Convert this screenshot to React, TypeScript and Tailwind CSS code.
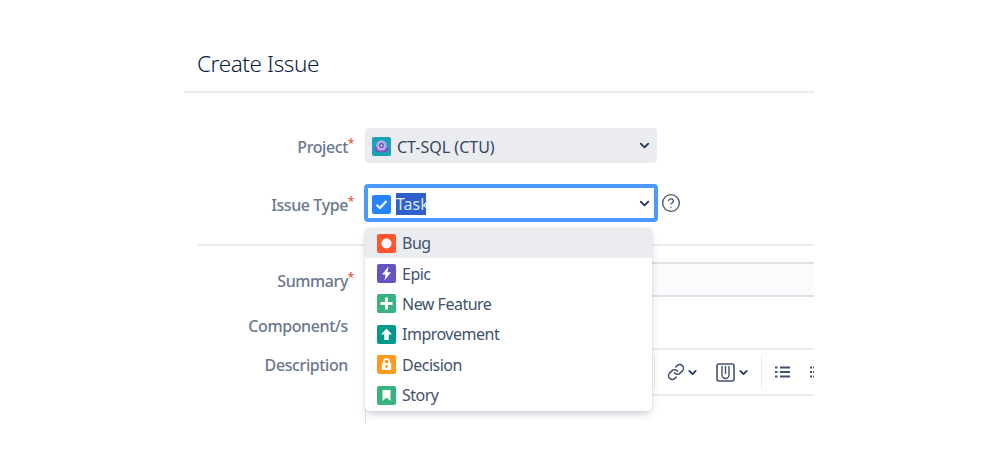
import { ChevronDown, CircleHelp, Link } from 'lucide-react';
import type { ReactNode } from 'react';

const font = { fontFamily: '"Noto Sans", "Open Sans", sans-serif' };

function Label({ text, required, className }: { text: string; required?: boolean; className?: string }) {
    return (
        <div className={`w-[181px] shrink-0 flex justify-end pr-[17px] text-[16px] leading-[22px] tracking-[-0.4px] font-medium text-[#6b778c] ${className ?? ''}`}>
            <span className="relative">
                {text}
                {required && <span className="absolute -right-[6px] -top-[3px] text-[12px] text-[#e5573a]">*</span>}
            </span>
        </div>
    );
}

function IssueIcon({ bg, children }: { bg: string; children: ReactNode }) {
    return (
        <svg width="19" height="19" viewBox="0 0 19 19" className="shrink-0">
            <rect width="19" height="19" rx="2" fill={bg} />
            {children}
        </svg>
    );
}

const issueTypes = [
    { name: 'Bug', bg: '#ff5630', glyph: <circle cx="9.5" cy="9.5" r="5" fill="#fff" /> },
    { name: 'Epic', bg: '#6554c0', glyph: <path d="M11.5 2.5 5 10.5h3.5L7.5 16.5l6.5-8.2h-3.6z" fill="#fff" /> },
    { name: 'New Feature', bg: '#36b37e', glyph: <path d="M9.5 3.5v12M3.5 9.5h12" stroke="#fff" strokeWidth="2.8" /> },
    { name: 'Improvement', bg: '#00998a', glyph: <path d="M9.5 3.5 15 9.5h-3.2V15H7.2V9.5H4z" fill="#fff" /> },
    {
        name: 'Decision',
        bg: '#ff991f',
        glyph: (
            <>
                <path d="M6.8 8.5V6.5a2.7 2.7 0 0 1 5.4 0v2" fill="none" stroke="#fff" strokeWidth="1.7" />
                <rect x="4.8" y="8" width="9.4" height="7" rx="1" fill="#fff" />
                <circle cx="9.5" cy="11.5" r="1.4" fill="#ff991f" />
            </>
        ),
    },
    { name: 'Story', bg: '#36b37e', glyph: <path d="M5.5 4h8v11l-4-3.2-4 3.2z" fill="#fff" /> },
];

function ToolbarDivider() {
    return <div className="w-[1px] h-[36px] bg-[#ebecf0] shrink-0" />;
}

export default function App() {
    return (
        <div className="w-[998px] h-[457px] bg-white overflow-hidden" style={font}>
            <div className="w-[630px] h-[457px] ml-[184px] overflow-hidden">
                <div className="h-[93px] border-b-2 border-[#ebecf0] pl-[13px] pt-[47px] text-[22.5px] font-light leading-[34px] tracking-[-0.4px] text-[#091e42]">
                    Create Issue
                </div>

                <div className="flex items-center mt-[35px] h-[35px]">
                    <Label text="Project" required className="mt-[3px]" />
                    <div className="w-[292px] h-[35px] rounded-[4px] bg-[#ebecf0] flex items-center pl-[7px] pr-[5px]">
                        <svg width="19" height="19" viewBox="0 0 19 19" className="shrink-0 mt-[2px]">
                            <rect width="19" height="19" rx="2" fill="#1aa3b8" />
                            <ellipse cx="9.5" cy="12" rx="7" ry="3.6" fill="#7d4fc2" />
                            <circle cx="9.5" cy="8.5" r="5.2" fill="#b9a8e6" />
                            <circle cx="9.5" cy="8.5" r="2.4" fill="#5a49b0" />
                            <circle cx="9.5" cy="8.5" r="1" fill="#fff" />
                        </svg>
                        <span className="ml-[6px] mt-[2px] text-[16px] text-[#344563]">CT-SQL (CTU)</span>
                        <ChevronDown size={15} strokeWidth={3} className="ml-auto text-[#253858]" />
                    </div>
                </div>

                <div className="flex items-center mt-[21px] h-[38px]">
                    <Label text="Issue Type" required className="-mr-[1px] mt-[4px]" />
                    <div className="w-[294px] h-[38px] rounded-[4px] border-[4px] border-[#4c9aff] bg-white flex items-center pl-[4px] pr-[2px]">
                        <svg width="19" height="19" viewBox="0 0 19 19" className="shrink-0 mt-[3px]">
                            <rect width="19" height="19" rx="2" fill="#2684ff" />
                            <path d="M4.5 9.8 8 13l6.5-7" fill="none" stroke="#fff" strokeWidth="2.2" />
                        </svg>
                        <span className="ml-[5px] mt-[2px] text-[16px] leading-[22px] bg-[#2f5fc9] text-[#dfe6f5] w-[30px]">Task</span>
                        <ChevronDown size={15} strokeWidth={3} className="ml-auto mt-[1px] text-[#253858]" />
                    </div>
                    <CircleHelp size={20} strokeWidth={1.6} className="ml-[3px] text-[#42526e]" />
                </div>

                <div className="relative">
                    <div className="ml-[13px] mt-[22px] h-[2px] bg-[#ebecf0]" />

                    <div className="flex items-center mt-[16px] h-[35px]">
                        <Label text="Summary" required className="mt-[3px]" />
                        <div className="flex-1 h-[35px] border-y-2 border-[#dfe1e6] bg-[#fafbfc]" />
                    </div>

                    <div className="flex h-[22px] mt-[18px]">
                        <Label text="Component/s" />
                    </div>

                    <div className="flex mt-[17px]">
                        <Label text="Description" />
                        <div className="flex-1 min-w-0 border-l border-[#dfe1e6]">
                            <div className="h-[48px] -mt-[6px] border-y-2 border-[#ebecf0] flex items-center pl-[288px] overflow-hidden">
                                <ToolbarDivider />
                                <Link size={18} strokeWidth={2} className="ml-[12px] shrink-0 text-[#42526e]" />
                                <ChevronDown size={13} strokeWidth={3.2} className="ml-[1px] shrink-0 text-[#253858]" />
                                <svg width="19" height="19" viewBox="0 0 19 19" className="ml-[17px] shrink-0 text-[#42526e]">
                                    <rect x="1" y="1" width="17" height="17" rx="2" fill="none" stroke="currentColor" strokeWidth="1.6" />
                                    <path d="M6 3v9a3.5 3.5 0 0 0 7 0V3M9.5 3v8" fill="none" stroke="currentColor" strokeWidth="1.4" />
                                </svg>
                                <ChevronDown size={13} strokeWidth={3.2} className="ml-[2px] shrink-0 text-[#253858]" />
                                <div className="ml-[11px]"><ToolbarDivider /></div>
                                <svg width="15" height="12" viewBox="0 0 15 12" className="ml-[13px] shrink-0 text-[#42526e]">
                                    <path d="M0 1.5h2.5M5 1.5h10M0 6h2.5M5 6h10M0 10.5h2.5M5 10.5h10" stroke="currentColor" strokeWidth="2" />
                                </svg>
                                <svg width="8" height="12" viewBox="0 0 8 12" className="ml-[20px] shrink-0 text-[#42526e]">
                                    <path d="M0 1.5h4M0 6h8M0 10.5h8" stroke="currentColor" strokeWidth="2" strokeDasharray="2 1" />
                                </svg>
                            </div>
                            <div className="h-[28px]" />
                        </div>
                    </div>

                    <div className="absolute left-[181px] top-[-16px] w-[287px] h-[183px] rounded-[4px] bg-white shadow-[0_4px_8px_-2px_rgba(9,30,66,0.25),0_0_1px_rgba(9,30,66,0.31)] overflow-hidden">
                        {issueTypes.map((t, i) => (
                            <div key={t.name} className={`h-[30.4px] flex items-center pl-[12px] gap-[6px] text-[16px] tracking-[-0.5px] text-[#42526e] ${i === 0 ? 'bg-[#ebecf0]' : ''}`}>
                                <IssueIcon bg={t.bg}>{t.glyph}</IssueIcon>
                                <span>{t.name}</span>
                            </div>
                        ))}
                    </div>
                </div>
            </div>
        </div>
    );
}
